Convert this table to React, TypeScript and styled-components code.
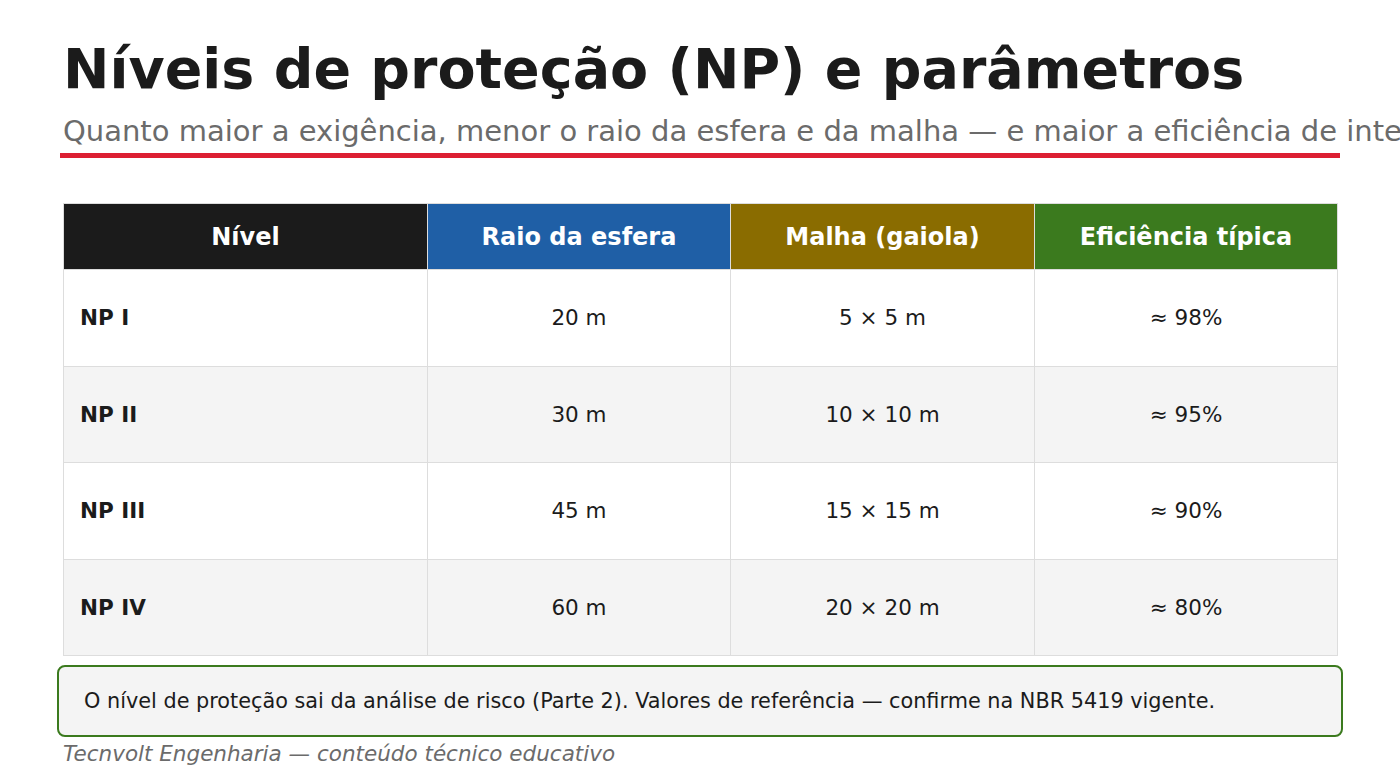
import styled, { createGlobalStyle } from 'styled-components';

const GlobalStyle = createGlobalStyle`
  html, body {
    margin: 0;
    padding: 0;
    background: #ffffff;
    overflow: hidden;
  }
  body {
    font-family: 'DejaVu Sans', sans-serif;
    color: #1b1b1b;
  }
`;

const Slide = styled.main`
  width: 1400px;
  height: 780px;
  box-sizing: border-box;
  padding: 36px 60px 0;
  display: flex;
  flex-direction: column;
`;

const Header = styled.header`
  border-bottom: 5px solid #dc1f32;
  padding: 0 3px 4px;
  margin-bottom: 45px;
`;

const Title = styled.h1`
  margin: 0;
  font-size: 55.5px;
  line-height: 66px;
  font-weight: 700;
  color: #1b1b1b;
  white-space: nowrap;
`;

const Subtitle = styled.p`
  margin: 11px 0 0;
  font-size: 29px;
  line-height: 36px;
  color: #6b6b6b;
  white-space: nowrap;
`;

const Table = styled.table`
  margin: 0 3px;
  width: 1274px;
  border-collapse: collapse;
  table-layout: fixed;
`;

const HeadCell = styled.th<{ $bg: string }>`
  background: ${(p) => p.$bg};
  color: #ffffff;
  height: 65px;
  padding: 0;
  font-size: 24px;
  font-weight: 700;
  text-align: center;
  border: 1px solid #dddddd;
`;

const Row = styled.tr<{ $alt: boolean }>`
  background: ${(p) => (p.$alt ? '#f4f4f4' : '#ffffff')};
`;

const Cell = styled.td<{ $head?: boolean }>`
  height: 95.5px;
  padding: 0 16px;
  border: 1px solid #dddddd;
  font-size: 21.5px;
  text-align: ${(p) => (p.$head ? 'left' : 'center')};
  font-weight: ${(p) => (p.$head ? 700 : 400)};
  color: #1b1b1b;
`;

const Note = styled.div`
  margin: 9px -3px 0;
  border: 2px solid #3b7a1e;
  border-radius: 8px;
  background: #f4f4f4;
  padding: 0 25px;
  height: 72px;
  box-sizing: border-box;
  display: flex;
  align-items: center;
  font-size: 20.8px;
  color: #1b1b1b;
`;

const Footer = styled.footer`
  margin: 3px 3px 0;
  font-size: 21.5px;
  line-height: 28px;
  font-style: italic;
  color: #6b6b6b;
`;

const columns = [
  { label: 'Nível', color: '#1b1b1b', width: 364 },
  { label: 'Raio da esfera', color: '#1f5fa6', width: 303 },
  { label: 'Malha (gaiola)', color: '#8a6c00', width: 304 },
  { label: 'Eficiência típica', color: '#3b7a1e', width: 303 },
];

const levels = [
  { name: 'NP I', radius: '20 m', mesh: '5 × 5 m', eff: '≈ 98%' },
  { name: 'NP II', radius: '30 m', mesh: '10 × 10 m', eff: '≈ 95%' },
  { name: 'NP III', radius: '45 m', mesh: '15 × 15 m', eff: '≈ 90%' },
  { name: 'NP IV', radius: '60 m', mesh: '20 × 20 m', eff: '≈ 80%' },
];

export default function App() {
  return (
    <>
      <GlobalStyle />
      <Slide>
        <Header>
          <Title>Níveis de proteção (NP) e parâmetros</Title>
          <Subtitle>
            Quanto maior a exigência, menor o raio da esfera e da malha — e maior a eficiência de interceptação.
          </Subtitle>
        </Header>
        <Table>
          <colgroup>
            {columns.map((c) => (
              <col key={c.label} style={{ width: c.width }} />
            ))}
          </colgroup>
          <thead>
            <tr>
              {columns.map((c) => (
                <HeadCell key={c.label} $bg={c.color}>
                  {c.label}
                </HeadCell>
              ))}
            </tr>
          </thead>
          <tbody>
            {levels.map((l, i) => (
              <Row key={l.name} $alt={i % 2 === 1}>
                <Cell $head>{l.name}</Cell>
                <Cell>{l.radius}</Cell>
                <Cell>{l.mesh}</Cell>
                <Cell>{l.eff}</Cell>
              </Row>
            ))}
          </tbody>
        </Table>
        <Note>
          O nível de proteção sai da análise de risco (Parte 2). Valores de referência — confirme na NBR 5419 vigente.
        </Note>
        <Footer>Tecnvolt Engenharia — conteúdo técnico educativo</Footer>
      </Slide>
    </>
  );
}
